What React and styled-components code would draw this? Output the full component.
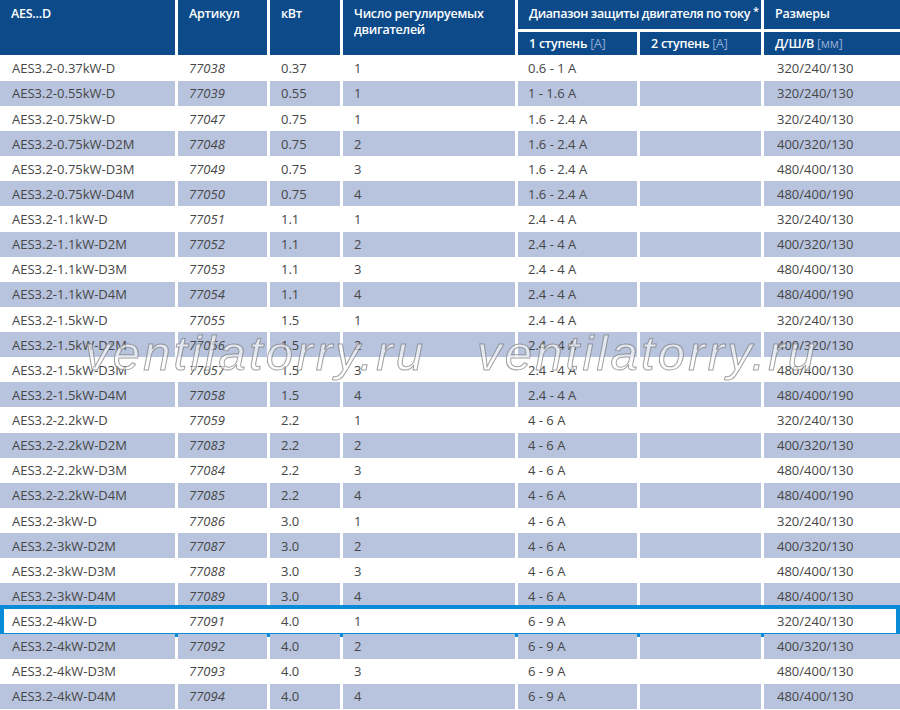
import React from 'react'
import styled, { createGlobalStyle } from 'styled-components'

const GlobalStyle = createGlobalStyle`
  html, body {
    margin: 0;
    padding: 0;
    background: #ffffff;
  }
  body {
    font-family: "Open Sans", "Noto Sans", sans-serif;
  }
`

const COLS = '175px 89px 70px 172px 119px 121px 136px'

const rows = [
  ['AES3.2-0.37kW-D', '77038', '0.37', '1', '0.6 - 1 A', '320/240/130'],
  ['AES3.2-0.55kW-D', '77039', '0.55', '1', '1 - 1.6 A', '320/240/130'],
  ['AES3.2-0.75kW-D', '77047', '0.75', '1', '1.6 - 2.4 A', '320/240/130'],
  ['AES3.2-0.75kW-D2M', '77048', '0.75', '2', '1.6 - 2.4 A', '400/320/130'],
  ['AES3.2-0.75kW-D3M', '77049', '0.75', '3', '1.6 - 2.4 A', '480/400/130'],
  ['AES3.2-0.75kW-D4M', '77050', '0.75', '4', '1.6 - 2.4 A', '480/400/190'],
  ['AES3.2-1.1kW-D', '77051', '1.1', '1', '2.4 - 4 A', '320/240/130'],
  ['AES3.2-1.1kW-D2M', '77052', '1.1', '2', '2.4 - 4 A', '400/320/130'],
  ['AES3.2-1.1kW-D3M', '77053', '1.1', '3', '2.4 - 4 A', '480/400/130'],
  ['AES3.2-1.1kW-D4M', '77054', '1.1', '4', '2.4 - 4 A', '480/400/190'],
  ['AES3.2-1.5kW-D', '77055', '1.5', '1', '2.4 - 4 A', '320/240/130'],
  ['AES3.2-1.5kW-D2M', '77056', '1.5', '2', '2.4 - 4 A', '400/320/130'],
  ['AES3.2-1.5kW-D3M', '77057', '1.5', '3', '2.4 - 4 A', '480/400/130'],
  ['AES3.2-1.5kW-D4M', '77058', '1.5', '4', '2.4 - 4 A', '480/400/190'],
  ['AES3.2-2.2kW-D', '77059', '2.2', '1', '4 - 6 A', '320/240/130'],
  ['AES3.2-2.2kW-D2M', '77083', '2.2', '2', '4 - 6 A', '400/320/130'],
  ['AES3.2-2.2kW-D3M', '77084', '2.2', '3', '4 - 6 A', '480/400/130'],
  ['AES3.2-2.2kW-D4M', '77085', '2.2', '4', '4 - 6 A', '480/400/190'],
  ['AES3.2-3kW-D', '77086', '3.0', '1', '4 - 6 A', '320/240/130'],
  ['AES3.2-3kW-D2M', '77087', '3.0', '2', '4 - 6 A', '400/320/130'],
  ['AES3.2-3kW-D3M', '77088', '3.0', '3', '4 - 6 A', '480/400/130'],
  ['AES3.2-3kW-D4M', '77089', '3.0', '4', '4 - 6 A', '480/400/130'],
  ['AES3.2-4kW-D', '77091', '4.0', '1', '6 - 9 A', '320/240/130'],
  ['AES3.2-4kW-D2M', '77092', '4.0', '2', '6 - 9 A', '400/320/130'],
  ['AES3.2-4kW-D3M', '77093', '4.0', '3', '6 - 9 A', '480/400/130'],
  ['AES3.2-4kW-D4M', '77094', '4.0', '4', '6 - 9 A', '480/400/130'],
]

const HIGHLIGHT = 22

const Page = styled.div`
  position: relative;
  width: 900px;
  height: 710px;
  overflow: hidden;
  background: #fff;
`

const Head = styled.div`
  display: grid;
  grid-template-columns: ${COLS};
  grid-template-rows: 29px 23px;
  column-gap: 3px;
  row-gap: 3px;
  height: 55px;
  margin-bottom: 0.7px;
`

const HeadCell = styled.div`
  background: #0c4a8a;
  color: #ffffff;
  font-size: 12.5px;
  font-weight: 600;
  letter-spacing: ${p => (p.$tight ? '-0.4px' : '-0.25px')};
  line-height: 16px;
  padding: ${p => (p.$sub ? '4px 0 0 11px' : '6px 0 0 11px')};
  grid-column: ${p => p.$col || 'auto'};
  grid-row: ${p => p.$row || 'auto'};
  white-space: nowrap;
  box-sizing: border-box;
`

const Unit = styled.span`
  color: #93aad2;
  font-weight: 400;
`

const Star = styled.span`
  font-size: 11px;
  margin-left: 3px;
  position: relative;
  top: -3px;
`

const Row = styled.div`
  position: relative;
  display: grid;
  grid-template-columns: ${COLS};
  column-gap: 3px;
  height: 25.14px;

  ${p =>
    p.$active &&
    `
    &::after {
      content: '';
      position: absolute;
      left: 0;
      right: 0;
      top: -3px;
      bottom: -3px;
      border: 4px solid #0a8bd8;
      pointer-events: none;
    }
  `}
`

const Cell = styled.div`
  display: flex;
  align-items: center;
  padding-left: ${p => p.$pad || 11}px;
  background: ${p => (p.$alt ? '#b8c4de' : '#ffffff')};
  color: #464646;
  font-size: 13px;
  font-style: ${p => (p.$italic ? 'italic' : 'normal')};
  white-space: nowrap;
  overflow: hidden;
`

const Watermark = styled.div`
  position: absolute;
  top: 329px;
  left: ${p => p.$left}px;
  font-family: "Liberation Sans", sans-serif;
  font-style: italic;
  font-size: 49px;
  line-height: 1;
  letter-spacing: 3.2px;
  color: rgba(255, 255, 255, 0.6);
  -webkit-text-stroke: 1px rgba(120, 120, 120, 0.7);
  pointer-events: none;
  white-space: nowrap;
`

export default function App() {
  return (
    <Page>
      <GlobalStyle />
      <Head>
        <HeadCell $row="1 / 3">AES...D</HeadCell>
        <HeadCell $row="1 / 3">Артикул</HeadCell>
        <HeadCell $row="1 / 3">кВт</HeadCell>
        <HeadCell $row="1 / 3">
          Число регулируемых
          <br />
          двигателей
        </HeadCell>
        <HeadCell $tight $col="5 / 7" $row="1">
          Диапазон защиты двигателя по току<Star>*</Star>
        </HeadCell>
        <HeadCell $col="7" $row="1">Размеры</HeadCell>
        <HeadCell $sub $col="5" $row="2">
          1 ступень <Unit>[A]</Unit>
        </HeadCell>
        <HeadCell $sub $col="6" $row="2">
          2 ступень <Unit>[A]</Unit>
        </HeadCell>
        <HeadCell $sub $col="7" $row="2">
          Д/Ш/В <Unit>[мм]</Unit>
        </HeadCell>
      </Head>

      {rows.map((r, i) => {
        const alt = i % 2 === 1
        return (
          <Row key={r[1]} $active={i === HIGHLIGHT}>
            <Cell $alt={alt} $pad={12}>{r[0]}</Cell>
            <Cell $alt={alt} $italic>{r[1]}</Cell>
            <Cell $alt={alt}>{r[2]}</Cell>
            <Cell $alt={alt}>{r[3]}</Cell>
            <Cell $alt={alt} $pad={10}>{r[4]}</Cell>
            <Cell $alt={alt}></Cell>
            <Cell $alt={alt} $pad={13}>{r[5]}</Cell>
          </Row>
        )
      })}

      <Watermark $left={85}>ventilatorry.ru</Watermark>
      <Watermark $left={477}>ventilatorry.ru</Watermark>
    </Page>
  )
}
